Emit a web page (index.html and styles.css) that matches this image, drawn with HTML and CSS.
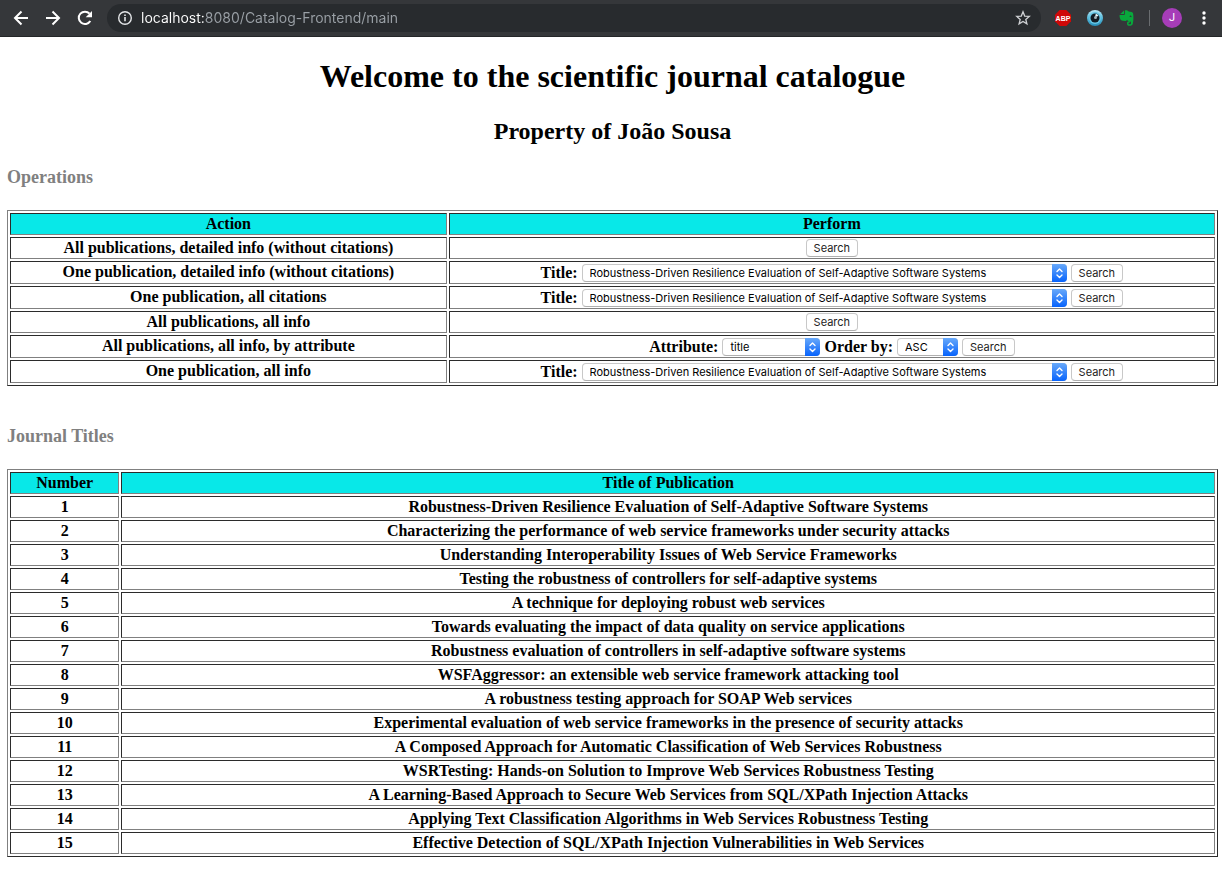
FILE: index.html
```html
<!DOCTYPE html>
<html lang="en">
<head>
<meta charset="utf-8">
<title>Scientific journal catalogue</title>
<link rel="stylesheet" href="styles.css">
</head>
<body>
<header class="toolbar">
  <nav class="nav">
    <button class="icon-btn" aria-label="Back"><svg width="20" height="20" viewBox="0 0 20 20" fill="none" stroke="#fff" stroke-width="2"><path d="M17 10H4M10.500 3.500 4 10l6.500 6.500"/></svg></button>
    <button class="icon-btn" aria-label="Forward"><svg width="20" height="20" viewBox="0 0 20 20" fill="none" stroke="#fff" stroke-width="2"><path d="M3 10h13M9.500 3.500 16 10l-6.500 6.500"/></svg></button>
    <button class="icon-btn" aria-label="Reload"><svg width="20" height="20" viewBox="0 0 20 20"><path d="M15.300 13A6.200 6.200 0 1 1 14.600 5.700" fill="none" stroke="#fff" stroke-width="2"/><path d="M17 3v6.300h-6.300z" fill="#fff"/></svg></button>
  </nav>
  <div class="omnibox">
    <svg width="16" height="16" viewBox="0 0 16 16"><circle cx="8" cy="8" r="6.300" fill="none" stroke="#e4e6e8" stroke-width="1.400"/><path d="M7.200 7h1.600v4.300H7.200zM7.200 4.500h1.600V6H7.200z" fill="#e4e6e8"/></svg>
    <input class="url" type="text" aria-label="Address" value="localhost:8080/Catalog-Frontend/main">
    <button class="icon-btn" aria-label="Bookmark"><svg width="16" height="16" viewBox="0 0 16 16"><path d="m8 1.800 1.700 4.300 4.600.3-3.500 3 1.100 4.500L8 11.500l-3.900 2.400 1.100-4.500-3.500-3 4.600-.3z" fill="none" stroke="#d0d2d5" stroke-width="1.300"/></svg></button>
  </div>
  <div class="extensions">
    <button class="icon-btn" aria-label="AdBlock Plus"><svg width="16" height="16" viewBox="0 0 16 16"><path d="M4.700 0h6.600L16 4.700v6.600L11.300 16H4.700L0 11.300V4.700z" fill="#cf0808"/><text class="abp" x="8" y="11" text-anchor="middle">ABP</text></svg></button>
    <button class="icon-btn" aria-label="Eye extension"><svg width="16" height="16" viewBox="0 0 16 16"><defs><linearGradient id="eye" x2="0" y2="1"><stop stop-color="#b9e8f6"/><stop offset=".5" stop-color="#58bbdc"/><stop offset="1" stop-color="#258db9"/></linearGradient></defs><circle cx="8" cy="8" r="8" fill="url(#eye)"/><circle cx="8" cy="8" r="6" fill="#65c5e5"/><circle cx="8" cy="8" r="4.500" fill="#111b24"/><path d="m8 7 .8-3.300A4.500 4.500 0 0 1 11.500 6z" fill="#eefaff"/><circle cx="8.500" cy="7.500" r="1.500" fill="#9fb2ba"/></svg></button>
    <button class="icon-btn" aria-label="Evernote"><svg width="16" height="16" viewBox="0 0 16 16"><path d="M5 .5V4H1.300zM5.800.4C8 0 9.200.8 9.600 1.600c2 .1 4.200.4 4.500 2 .5 2.600.5 7.300-.3 10.200-.4 1.400-1.500 2-3.200 2-1.900 0-2.600-.9-2.600-2.300 0-1.800 1.200-2.500 3-2.400v1.400c-1 0-1.500.2-1.500.9 0 .6.500.9 1.400.9.800 0 1.100-.5 1.100-1.400 0-1.300-.5-1.900-2-2-1 0-1.600-.3-2-1.200-.3 1.100-1 1.400-2.200 1.300-2.700-.2-4.100-.7-4.600-2C.6 7.400.4 6 .6 4.900h4.600c.5 0 .7-.3.7-.8zM10.600 7c.8-.2 1.400-.1 2 .3 0-1.200-.4-1.900-1.100-1.900-.6 0-.9.700-.9 1.600z" fill="#08a83c"/></svg></button>
  </div>
  <span class="divider"></span>
  <button class="avatar" aria-label="Profile">J</button>
  <button class="icon-btn menu" aria-label="Menu"><svg width="16" height="16" viewBox="0 0 16 16" fill="#fff"><circle cx="8" cy="3" r="1.700"/><circle cx="8" cy="8" r="1.700"/><circle cx="8" cy="13" r="1.700"/></svg></button>
</header>
<svg class="defs" aria-hidden="true"><defs><linearGradient id="blue" x2="0" y2="1"><stop stop-color="#68a9fa"/><stop offset="1" stop-color="#0763fc"/></linearGradient>
<symbol id="stepper" viewBox="0 0 15 18"><path d="M0 0h11a4 4 0 0 1 4 4v10a4 4 0 0 1-4 4H0z" fill="url(#blue)"/><path d="m5 7.500 2.500-2.500 2.500 2.500m-5 3.500 2.500 2.500 2.500-2.500" fill="none" stroke="#fff" stroke-width="1.400" stroke-linecap="round" stroke-linejoin="round"/></symbol></defs></svg>
<main class="page">
  <h1>Welcome to the scientific journal catalogue</h1>
  <h2>Property of João Sousa</h2>
  <h3>Operations</h3>
  <table class="grid operations">
    <thead><tr><th class="key">Action</th><th>Perform</th></tr></thead>
    <tbody>
      <tr><th>All publications, detailed info (without citations)</th><td><div class="form"><button class="search">Search</button></div></td></tr>
      <tr class="tall"><th>One publication, detailed info (without citations)</th><td><div class="form"><label for="t1">Title:</label><span class="picker title"><select id="t1"><option>Robustness-Driven Resilience Evaluation of Self-Adaptive Software Systems</option></select><svg class="arrows"><use href="#stepper"/></svg></span><button class="search">Search</button></div></td></tr>
      <tr class="tall"><th>One publication, all citations</th><td><div class="form"><label for="t2">Title:</label><span class="picker title"><select id="t2"><option>Robustness-Driven Resilience Evaluation of Self-Adaptive Software Systems</option></select><svg class="arrows"><use href="#stepper"/></svg></span><button class="search">Search</button></div></td></tr>
      <tr><th>All publications, all info</th><td><div class="form"><button class="search">Search</button></div></td></tr>
      <tr class="tall"><th>All publications, all info, by attribute</th><td><div class="form"><label for="attr">Attribute:</label><span class="picker attribute"><select id="attr"><option>title</option></select><svg class="arrows"><use href="#stepper"/></svg></span><label for="order">Order by:</label><span class="picker order"><select id="order"><option>ASC</option><option>DESC</option></select><svg class="arrows"><use href="#stepper"/></svg></span><button class="search">Search</button></div></td></tr>
      <tr class="tall"><th>One publication, all info</th><td><div class="form"><label for="t3">Title:</label><span class="picker title"><select id="t3"><option>Robustness-Driven Resilience Evaluation of Self-Adaptive Software Systems</option></select><svg class="arrows"><use href="#stepper"/></svg></span><button class="search">Search</button></div></td></tr>
    </tbody>
  </table>
  <h3 class="second">Journal Titles</h3>
  <table class="grid journals">
    <thead><tr><th class="key">Number</th><th>Title of Publication</th></tr></thead>
    <tbody>
      <tr><th>1</th><td>Robustness-Driven Resilience Evaluation of Self-Adaptive Software Systems</td></tr>
      <tr><th>2</th><td>Characterizing the performance of web service frameworks under security attacks</td></tr>
      <tr><th>3</th><td>Understanding Interoperability Issues of Web Service Frameworks</td></tr>
      <tr><th>4</th><td>Testing the robustness of controllers for self-adaptive systems</td></tr>
      <tr><th>5</th><td>A technique for deploying robust web services</td></tr>
      <tr><th>6</th><td>Towards evaluating the impact of data quality on service applications</td></tr>
      <tr><th>7</th><td>Robustness evaluation of controllers in self-adaptive software systems</td></tr>
      <tr><th>8</th><td>WSFAggressor: an extensible web service framework attacking tool</td></tr>
      <tr><th>9</th><td>A robustness testing approach for SOAP Web services</td></tr>
      <tr><th>10</th><td>Experimental evaluation of web service frameworks in the presence of security attacks</td></tr>
      <tr><th>11</th><td>A Composed Approach for Automatic Classification of Web Services Robustness</td></tr>
      <tr><th>12</th><td>WSRTesting: Hands-on Solution to Improve Web Services Robustness Testing</td></tr>
      <tr><th>13</th><td>A Learning-Based Approach to Secure Web Services from SQL/XPath Injection Attacks</td></tr>
      <tr><th>14</th><td>Applying Text Classification Algorithms in Web Services Robustness Testing</td></tr>
      <tr><th>15</th><td>Effective Detection of SQL/XPath Injection Vulnerabilities in Web Services</td></tr>
    </tbody>
  </table>
</main>
</body>
</html>
```
FILE: styles.css
```css
* { box-sizing: border-box; }
body { margin: 0; background: #fff; color: #000; font: 16px/18px "Liberation Serif", "Times New Roman", serif; }
button, input, select { font-family: Inter, sans-serif; margin: 0; }

.toolbar { display: flex; align-items: center; height: 37px; padding: 0 10px 0 11px; background: #35373a; border-bottom: 1px solid #242628; }
.nav { display: flex; gap: 12px; }
.icon-btn { display: flex; padding: 0; border: 0; background: none; }
.omnibox { display: flex; flex: 1; align-items: center; gap: 8px; height: 28px; margin-left: 12px; padding: 0 10px; border-radius: 14px; background: #282b2e; }
.url { flex: 1; min-width: 0; height: 20px; padding: 0; border: 0; outline: 0; font: 14px/20px Inter, sans-serif; color: transparent; background: linear-gradient(90deg, #fff 63px, #9aa0a6 63px); -webkit-background-clip: text; background-clip: text; }
.extensions { display: flex; gap: 16px; margin-left: 14px; }
.abp { font: bold 7px "Liberation Sans", sans-serif; fill: #fff; }
.divider { width: 1px; height: 16px; margin: 0 12px 0 14px; background: #6a6d70; }
.avatar { width: 20px; height: 20px; padding: 0; border: 0; border-radius: 50%; background: #a63db8; color: #fff; font: 11px/20px Roboto, sans-serif; text-align: center; }
.menu { margin-left: 14px; }
.defs { position: absolute; width: 0; height: 0; }

.page { padding: 21px 4px 16px 7px; }
h1, h2 { text-align: center; }
h1 { margin: 0; font-size: 32px; line-height: 37px; }
h2 { margin: 22px 0 0; font-size: 24px; line-height: 28px; }
h3 { margin: 21px 0 22px; color: #808080; font-size: 18px; line-height: 22px; }
.second { margin-top: 39px; }

.grid { width: 100%; border: 1px solid; border-color: #808080 #2b2b2b #2b2b2b #808080; border-spacing: 2px; text-align: center; font-weight: bold; }
.grid th, .grid td { height: 22px; padding: 1px; border: 1px solid; border-color: #2b2b2b #808080 #808080 #2b2b2b; }
.grid thead th { background: #08e8e8; }
.grid .tall th, .grid .tall td { height: 23px; }
.grid .tall th { vertical-align: top; }
.operations .key { width: 36.3%; }
.journals .key { width: 9.1%; }
.form { display: flex; align-items: center; justify-content: center; gap: 4px; height: 18px; }

.search { height: 18px; padding: 0 7px; border: 1px solid #c8c8c8; border-bottom-color: #b0b0b0; border-radius: 4px; background: #fff; color: #222; font-size: 11px; line-height: 16px; }
.picker { position: relative; display: flex; height: 18px; }
.picker select { width: 100%; height: 18px; padding: 0 16px 0 7px; border: 1px solid #c8c8c8; border-bottom-color: #b0b0b0; border-radius: 4px; background: #fff; color: #000; font-size: 11px; line-height: 16px; appearance: none; }
.arrows { position: absolute; top: 0; right: 0; width: 15px; height: 18px; pointer-events: none; }
.title { width: 485px; }
.attribute { width: 98px; }
.order { width: 61px; }
```
